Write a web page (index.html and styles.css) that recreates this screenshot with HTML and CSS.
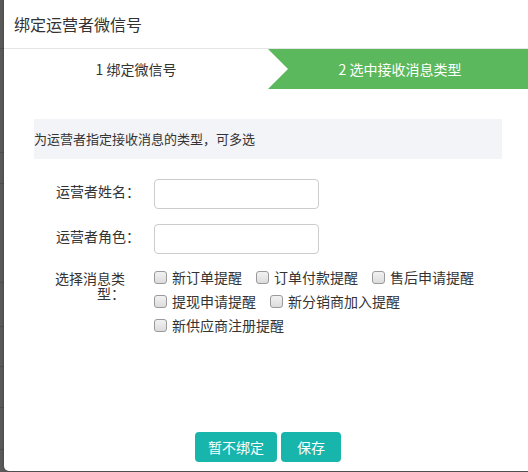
FILE: index.html
```html
<!DOCTYPE html>
<html lang="zh-CN">
<head>
<meta charset="utf-8">
<title>绑定运营者微信号</title>
<link rel="stylesheet" href="styles.css">
</head>
<body>
<div class="page">
  <div class="backdrop">
    <div class="bd-row r1"></div>
    <div class="bd-row r2"></div>
    <div class="bd-row r3"></div>
    <div class="bd-row r4"></div>
    <div class="bd-row r5"></div>
    <div class="bd-row r6"></div>
    <div class="bd-row r7"></div>
    <div class="bd-row r8"></div>
  </div>
  <div class="modal">
    <div class="modal-header">绑定运营者微信号</div>
    <div class="steps">
      <div class="step">1 绑定微信号</div>
      <div class="step step-active">2 选中接收消息类型</div>
    </div>
    <div class="modal-body">
      <div class="info">为运营者指定接收消息的类型，可多选</div>
      <div class="form">
        <label class="form-label">运营者姓名：</label>
        <div class="form-control"><input class="text-input" type="text"></div>
        <label class="form-label">运营者角色：</label>
        <div class="form-control"><input class="text-input" type="text"></div>
        <label class="form-label form-label-wrap">选择消息类型：</label>
        <div class="checks">
          <label class="check"><input type="checkbox" class="cb"><span>新订单提醒</span></label>
          <label class="check"><input type="checkbox" class="cb"><span>订单付款提醒</span></label>
          <label class="check"><input type="checkbox" class="cb"><span>售后申请提醒</span></label>
          <label class="check"><input type="checkbox" class="cb"><span>提现申请提醒</span></label>
          <label class="check"><input type="checkbox" class="cb"><span>新分销商加入提醒</span></label>
          <label class="check"><input type="checkbox" class="cb"><span>新供应商注册提醒</span></label>
        </div>
      </div>
    </div>
    <div class="modal-footer">
      <button class="btn btn-wide">暂不绑定</button>
      <button class="btn">保存</button>
    </div>
  </div>
</div>
</body>
</html>
```
FILE: styles.css
```css
* { box-sizing: border-box; }
html, body {
  margin: 0;
  padding: 0;
  width: 528px;
  height: 472px;
  overflow: hidden;
  background: #5a5a5a;
  font-family: "Noto Sans CJK SC", "Microsoft YaHei", sans-serif;
  color: #333;
}
.page {
  display: flex;
  align-items: flex-start;
  height: 472px;
}
.backdrop {
  width: 4px;
  flex: none;
  display: flex;
  flex-direction: column;
}
.bd-row { border-bottom: 1px solid #4e4e4e; }
.r1 { height: 49px; }
.r2 { height: 104px; }
.r3 { height: 31px; }
.r4 { height: 99px; }
.r5 { height: 44px; }
.r6 { height: 40px; }
.r7 { height: 41px; }
.r8 { height: 42px; }

.modal {
  width: 528px;
  flex: none;
  height: 471px;
  background: #fff;
  border-radius: 0 0 5px 5px;
  box-shadow: 0 0 3px rgba(0,0,0,0.35);
  display: flex;
  flex-direction: column;
}
.modal-header {
  height: 49px;
  border-bottom: 1px solid #e5e5e5;
  padding-left: 10px;
  display: flex;
  align-items: center;
  font-size: 16px;
  color: #333;
}
.steps {
  display: flex;
  height: 40px;
}
.step {
  flex: 1;
  display: flex;
  align-items: center;
  justify-content: center;
  font-size: 14px;
  color: #333;
  background: #fff;
}
.step-active {
  position: relative;
  background: #5cb85c;
  color: #fff;
}
.step-active::before {
  content: "";
  position: absolute;
  left: 0;
  top: 0;
  border-left: 20px solid #fff;
  border-top: 20px solid transparent;
  border-bottom: 20px solid transparent;
}
.modal-body {
  padding: 30px 30px 0;
}
.info {
  height: 40px;
  line-height: 40px;
  background: #f3f4f8;
  font-size: 13px;
  color: #333;
}
.form {
  margin-top: 20px;
  padding-left: 21px;
  display: grid;
  grid-template-columns: 85px 1fr;
  column-gap: 14px;
  row-gap: 15px;
  align-items: start;
}
.form-label {
  font-size: 14px;
  line-height: 24px;
  text-align: right;
  color: #333;
}
.form-label-wrap {
  line-height: 15px;
  padding-top: 2px;
  padding-right: 15px;
}
.text-input {
  display: block;
  width: 165px;
  height: 30px;
  border: 1px solid #ccc;
  border-radius: 4px;
  background: #fff;
  margin: 0;
}
.checks {
  display: flex;
  flex-wrap: wrap;
  row-gap: 8px;
}
.check {
  display: flex;
  align-items: center;
  height: 16px;
  margin-right: 14px;
  font-size: 14px;
  color: #333;
}
.cb {
  appearance: none;
  -webkit-appearance: none;
  width: 13px;
  height: 13px;
  margin: 0 5px 0 0;
  border: 1px solid #9a9a9a;
  border-radius: 3px;
  background: linear-gradient(#f2f2f2, #dcdcdc);
}
.modal-footer {
  margin-top: auto;
  padding-bottom: 9px;
  display: flex;
  justify-content: center;
  gap: 4px;
}
.btn {
  height: 30px;
  min-width: 60px;
  padding: 0 13px;
  border: none;
  border-radius: 4px;
  background: #17b5ac;
  color: #fff;
  font-family: inherit;
  font-size: 14px;
}
```
